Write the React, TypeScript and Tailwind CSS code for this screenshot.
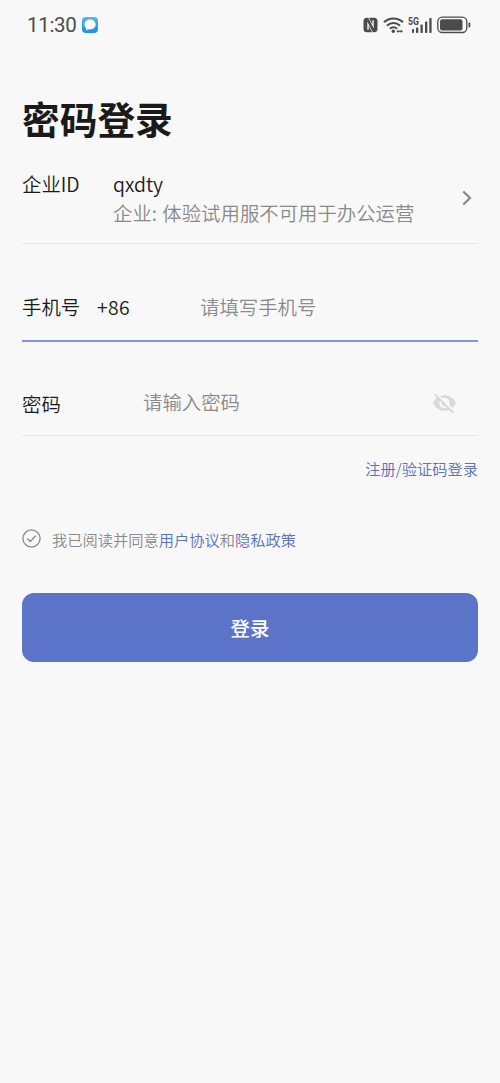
function StatusBar() {
  return (
    <header className="flex h-[50px] items-center justify-between pr-[29px] pl-[27px] text-[#4b4b4b]">
      <div className="flex items-center gap-[5px]">
        <span className="font-['Roboto','Noto_Sans_CJK_SC',sans-serif] text-[20.5px] leading-[24px] font-normal tracking-[-0.3px]">11:30</span>
        <svg width="16" height="16" viewBox="0 0 16 16" aria-hidden="true">
          <defs>
            <linearGradient id="chat" x1="0" y1="0" x2="0" y2="1">
              <stop offset="0" stopColor="#4bb9f5" />
              <stop offset="1" stopColor="#1b8fe0" />
            </linearGradient>
          </defs>
          <rect width="16" height="16" rx="4" fill="url(#chat)" />
          <path d="M8 2.6c3.200 0 5.600 2.100 5.600 4.900S11.200 12.400 8 12.400c-.6 0-1.200-.1-1.700-.2L3.900 13.500l.2-2.300C3 10.300 2.400 9 2.400 7.500 2.400 4.700 4.800 2.600 8 2.600Z" fill="#fff" />
        </svg>
      </div>
      <div className="flex items-center">
        <svg width="15" height="16" viewBox="0 0 15 16" fill="#4b4b4b" aria-hidden="true">
          <path d="M3.800.8H5.200L10.700 11.500V3.200H9.300V7.500L6 .8H11A3.500 3.500 0 0 1 14.500 4.300v7.400a3.500 3.500 0 0 1-3.500 3.500H9.800L4.300 4.500v8.300H5.700V8.500L9 15.200H4A3.500 3.500 0 0 1 .5 11.700V4.300A3.500 3.500 0 0 1 3.800.8Z" />
        </svg>
        <svg className="ml-[5px]" width="21" height="17" viewBox="0 0 21 17" fill="none" stroke="#4b4b4b" aria-hidden="true">
          <path d="M1 5.300C6.300.2 14.700.2 20 5.300M3.900 8.700c3.800-3.600 9.400-3.600 13.200 0M6.900 11.800c2-2 5.200-2 7.200 0" strokeWidth="2" />
          <circle cx="10.300" cy="14.300" r="1.700" fill="#4b4b4b" stroke="none" />
          <path d="M13.300 14.300l2.200-1.600v3.200zM20 14.300l-2.200-1.600v3.200z" fill="#4b4b4b" stroke="none" />
          <path d="M15 14.300h3.500" strokeWidth="1.200" />
        </svg>
        <svg className="ml-[4px]" width="25" height="18" viewBox="0 0 25 18" fill="#4b4b4b" aria-hidden="true">
          <text x="0" y="8.500" fontFamily="Roboto" fontWeight="700" fontSize="10" textLength="11" lengthAdjust="spacingAndGlyphs">5G</text>
          <rect x="4" y="13" width="2" height="4" rx=".7" />
          <rect x="8" y="11.500" width="2.300" height="5.500" rx=".7" />
          <rect x="12.500" y="8.500" width="2.300" height="8.500" rx=".7" />
          <rect x="17" y="5.500" width="2.300" height="11.500" rx=".7" />
          <rect x="21.300" y="2" width="2.300" height="15" rx=".7" />
        </svg>
        <svg className="ml-[4px]" width="34" height="18" viewBox="0 0 34 18" aria-hidden="true">
          <rect x=".8" y="1.100" width="29" height="15.400" rx="4.500" fill="none" stroke="#4b4b4b" strokeWidth="1.300" />
          <rect x="3" y="3.200" width="22.500" height="11.300" rx="2.200" fill="#4b4b4b" />
          <rect x="31.500" y="6.500" width="1.800" height="5" rx=".9" fill="#4b4b4b" />
        </svg>
      </div>
    </header>
  );
}

export default function App() {
  return (
    <div className="min-h-[1083px] bg-[#f8f8f8] font-['Noto_Sans_CJK_SC',sans-serif] text-[19.4px] font-[350] text-[#1a1a1a]">
      <StatusBar />
      <main className="px-[22px]">
        <h1 className="mt-[40px] h-[56px] text-[37.700px] leading-[56px] font-bold">密码登录</h1>

        <section className="mt-[23px] flex h-[75px] border-b border-[#e8e8e8]">
          <div className="w-[91px] leading-[29px]">企业ID</div>
          <div className="flex-1 leading-[29px]">
            <div>qxdty</div>
            <div className="whitespace-nowrap text-[#8a8a8a]">
              企业<span className="mr-[1px]">: </span>体验试用服不可用于办公运营
            </div>
          </div>
          <svg className="mt-[21px] mr-[6px]" width="10" height="16" viewBox="0 0 10 16" fill="none" stroke="#888" strokeWidth="2.200" aria-hidden="true">
            <path d="M1.300 1.500 8 8l-6.700 6.500" />
          </svg>
        </section>

        <label className="mt-[48px] flex h-[50px] border-b-2 border-[#8495d2] leading-[29px]">
          <span className="w-[75px]">手机号</span>
          <span className="w-[103px] tracking-[0.3px]">+86</span>
          <span className="text-[#8a8a8a]">请填写手机号</span>
        </label>

        <label className="mt-[46px] flex h-[48px] border-b border-[#e8e8e8] leading-[29px]">
          <span className="w-[121px] pt-px">密码</span>
          <span className="-mt-px flex-1 text-[#8a8a8a]">请输入密码</span>
          <svg className="mt-[2px] mr-[21px]" width="25" height="26" viewBox="0 0 24 24" fill="#d9d9d9" aria-hidden="true">
            <path d="M12 7c2.760 0 5 2.240 5 5 0 .65-.13 1.260-.36 1.830l2.920 2.920c1.510-1.260 2.700-2.890 3.430-4.750-1.730-4.390-6-7.500-11-7.500-1.400 0-2.740.25-3.980.7l2.160 2.160C10.740 7.130 11.350 7 12 7zM2 4.270l2.280 2.280.46.46C3.080 8.300 1.780 10.020 1 12c1.730 4.390 6 7.500 11 7.500 1.550 0 3.030-.3 4.380-.84l.42.42L19.730 22 21 20.730 3.270 3 2 4.270zM7.530 9.800l1.550 1.550c-.05.21-.08.43-.08.65 0 1.660 1.340 3 3 3 .22 0 .44-.03.65-.08l1.550 1.550c-.67.33-1.410.53-2.200.53-2.760 0-5-2.240-5-5 0-.79.2-1.530.53-2.200z" />
          </svg>
        </label>

        <div className="mt-[20px] text-right text-[15.250px] leading-[24px] text-[#5b71bd]">注册/验证码登录</div>

        <div className="mt-[47px] flex text-[15.250px] leading-[24px] text-[#8a8a8a]">
          <svg className="mt-[2px] mr-[11px]" width="19" height="19" viewBox="0 0 19 19" fill="none" stroke="#8a8a8a" strokeWidth="1.300" aria-hidden="true">
            <circle cx="9.500" cy="9.500" r="8.600" />
            <path d="m5.300 9.500 3 3 5.400-5.700" />
          </svg>
          <p>
            我已阅读并同意<a className="text-[#5b71bd]">用户协议</a>和<a className="text-[#5b71bd]">隐私政策</a>
          </p>
        </div>

        <button className="mt-[42px] block h-[69px] w-full rounded-[12px] bg-[#5b74c8] text-[19.400px] font-medium text-white">登录</button>
      </main>
    </div>
  );
}
